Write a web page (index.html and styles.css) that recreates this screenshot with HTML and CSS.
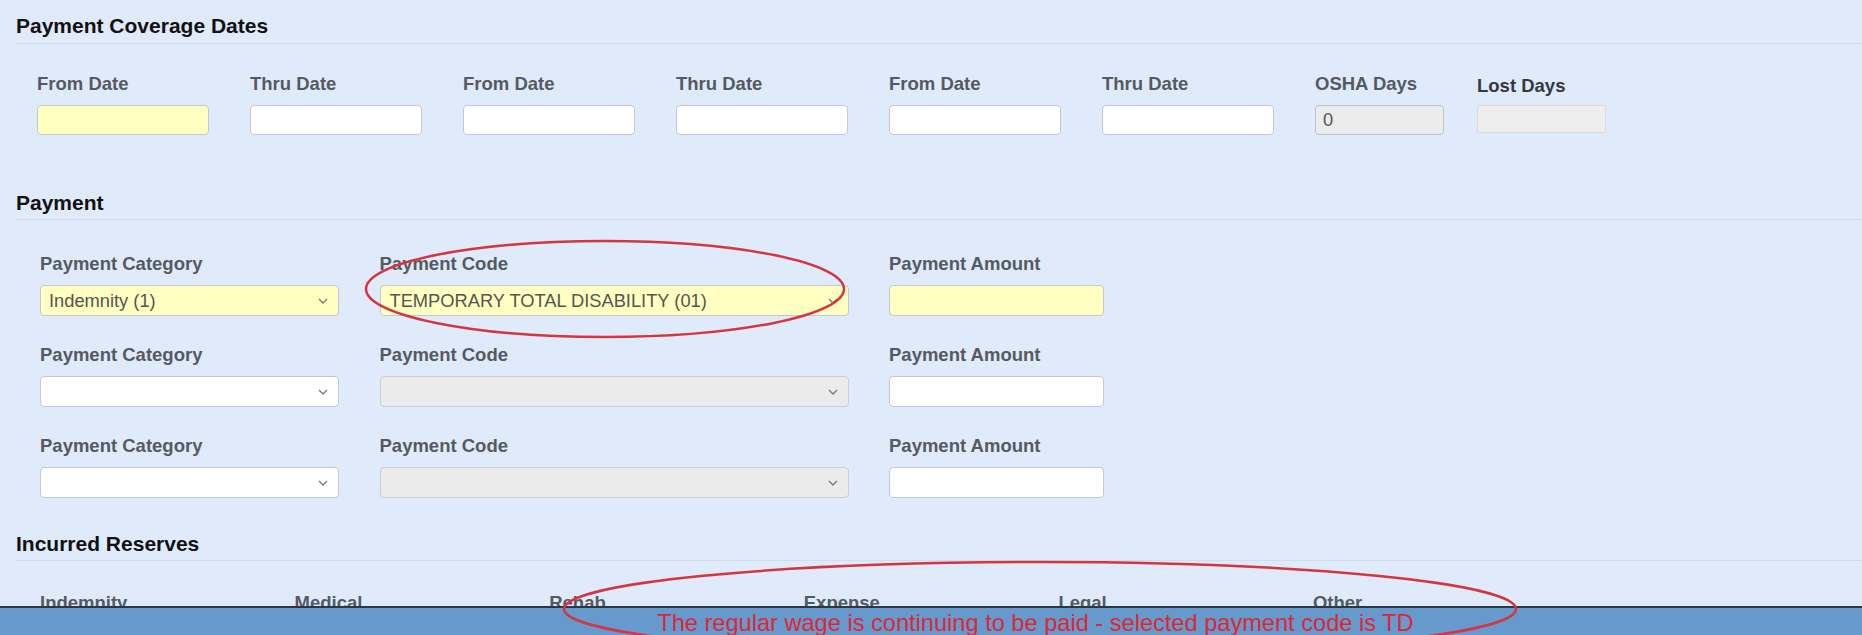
FILE: index.html
```html
<!DOCTYPE html>
<html lang="en">
<head>
<meta charset="utf-8">
<title>Payment</title>
<link rel="stylesheet" href="styles.css">
</head>
<body>
<div class="page">
  <section class="sec">
    <h2 class="sec-title">Payment Coverage Dates</h2>
    <div class="date-row">
      <div class="field date"><div class="lbl">From Date</div><div class="inp yellow"></div></div>
      <div class="field date"><div class="lbl">Thru Date</div><div class="inp"></div></div>
      <div class="field date"><div class="lbl">From Date</div><div class="inp"></div></div>
      <div class="field date"><div class="lbl">Thru Date</div><div class="inp"></div></div>
      <div class="field date"><div class="lbl">From Date</div><div class="inp"></div></div>
      <div class="field date"><div class="lbl">Thru Date</div><div class="inp"></div></div>
      <div class="field days"><div class="lbl">OSHA Days</div><div class="inp readonly"><span class="val">0</span></div></div>
      <div class="field days lost"><div class="lbl lbl-lost">Lost Days</div><div class="inp flat"></div></div>
    </div>
  </section>

  <section class="sec sec-pay">
    <h2 class="sec-title">Payment</h2>
    <div class="pay-grid">
      <div class="field"><div class="lbl">Payment Category</div><div class="sel yellow"><span class="val">Indemnity (1)</span><svg class="chev" width="10" height="6" viewBox="0 0 10 6"><polyline points="1,1 5,5 9,1" fill="none" stroke="#777" stroke-width="1.3"/></svg></div></div>
      <div class="field"><div class="lbl">Payment Code</div><div class="sel yellow"><span class="val">TEMPORARY TOTAL DISABILITY (01)</span><svg class="chev" width="10" height="6" viewBox="0 0 10 6"><polyline points="1,1 5,5 9,1" fill="none" stroke="#777" stroke-width="1.3"/></svg></div></div>
      <div class="field"><div class="lbl">Payment Amount</div><div class="inp amt yellow"></div></div>

      <div class="field"><div class="lbl">Payment Category</div><div class="sel"><span class="val"></span><svg class="chev" width="10" height="6" viewBox="0 0 10 6"><polyline points="1,1 5,5 9,1" fill="none" stroke="#777" stroke-width="1.3"/></svg></div></div>
      <div class="field"><div class="lbl">Payment Code</div><div class="sel disabled"><span class="val"></span><svg class="chev" width="10" height="6" viewBox="0 0 10 6"><polyline points="1,1 5,5 9,1" fill="none" stroke="#777" stroke-width="1.3"/></svg></div></div>
      <div class="field"><div class="lbl">Payment Amount</div><div class="inp amt"></div></div>

      <div class="field"><div class="lbl">Payment Category</div><div class="sel"><span class="val"></span><svg class="chev" width="10" height="6" viewBox="0 0 10 6"><polyline points="1,1 5,5 9,1" fill="none" stroke="#777" stroke-width="1.3"/></svg></div></div>
      <div class="field"><div class="lbl">Payment Code</div><div class="sel disabled"><span class="val"></span><svg class="chev" width="10" height="6" viewBox="0 0 10 6"><polyline points="1,1 5,5 9,1" fill="none" stroke="#777" stroke-width="1.3"/></svg></div></div>
      <div class="field"><div class="lbl">Payment Amount</div><div class="inp amt"></div></div>
    </div>
  </section>

  <section class="sec sec-res">
    <h2 class="sec-title">Incurred Reserves</h2>
    <div class="res-row">
      <div class="lbl">Indemnity</div>
      <div class="lbl">Medical</div>
      <div class="lbl">Rehab</div>
      <div class="lbl">Expense</div>
      <div class="lbl">Legal</div>
      <div class="lbl">Other</div>
    </div>
  </section>
</div>

<div class="footer-bar"><span class="msg">The regular wage is continuing to be paid - selected payment code is TD</span></div>

<svg class="annot" width="1862" height="635" viewBox="0 0 1862 635">
  <ellipse cx="605" cy="289" rx="239" ry="48" fill="none" stroke="#d6343f" stroke-width="2.5"/>
  <ellipse cx="1040" cy="609" rx="476" ry="47" fill="none" stroke="#d6343f" stroke-width="2.5"/>
</svg>
</body>
</html>
```

FILE: styles.css
```css
html, body {
  margin: 0;
  padding: 0;
}
body {
  background: #dfeafb;
  font-family: "Liberation Sans", Arial, sans-serif;
  width: 1862px;
  height: 635px;
  overflow: hidden;
  position: relative;
}
.page {
  padding-top: 14px;
}
.sec-title {
  margin: 0 0 0 16px;
  font-size: 21px;
  line-height: 24px;
  font-weight: bold;
  color: #111;
  padding-bottom: 5px;
  border-bottom: 1px solid #d2deee;
}
.lbl {
  font-size: 18.5px;
  line-height: 20px;
  font-weight: bold;
  color: #555a61;
  white-space: nowrap;
}
.field .lbl {
  margin-bottom: 11px;
}
.date-row {
  display: flex;
  gap: 41px;
  padding: 30px 0 0 37px;
}
.field.date { width: 172px; }
.field.days { width: 129px; }
.field.lost { margin-left: -8px; }
.lbl-lost {
  color: #35383d;
  position: relative;
  top: 2px;
}
.inp {
  height: 30px;
  box-sizing: border-box;
  background: #fff;
  border: 1px solid #c3c9d1;
  border-radius: 4px;
  display: flex;
  align-items: center;
  padding-left: 7px;
}
.inp.readonly {
  background: #ececec;
  border-color: #bfc4cb;
}
.inp.flat {
  background: #eeeeee;
  border: 1px solid #dadada;
  border-radius: 1px;
  height: 28px;
}
.yellow { background: #ffffc2 !important; }
.val {
  font-size: 18.3px;
  color: #555;
  white-space: nowrap;
}
.sec-pay .sec-title { margin-top: 56px; padding-bottom: 4px; }
.pay-grid {
  display: grid;
  grid-template-columns: 299px 469px 215px;
  column-gap: 40.5px;
  row-gap: 29px;
  padding: 34px 0 0 40px;
}
.sel {
  height: 31px;
  box-sizing: border-box;
  background: #fff;
  border: 1px solid #c3c9d1;
  border-radius: 4px;
  display: flex;
  align-items: center;
  justify-content: space-between;
  padding: 0 10px 0 8px;
}
.sel.disabled {
  background: #ebebeb;
  border-color: #cacdd2;
}
.pay-grid .field:nth-child(3n+2) .sel { padding-left: 9px; }
.chev { flex: none; }
.inp.amt { height: 31px; }
.sec-res .sec-title { margin-top: 34px; padding-bottom: 4px; }
.res-row {
  display: grid;
  grid-template-columns: repeat(6, 254.6px);
  padding: 32px 0 0 40px;
}
.footer-bar {
  position: fixed;
  left: 0;
  right: 0;
  bottom: 0;
  height: 27px;
  background: #6699cc;
  border-top: 2px solid #2d3644;
  padding-left: 657px;
  z-index: 5;
}
.msg {
  display: block;
  font-size: 23.6px;
  line-height: 29px;
  color: #e8202c;
  white-space: nowrap;
  padding-top: 1px;
}
.annot {
  position: absolute;
  left: 0;
  top: 0;
  z-index: 10;
  pointer-events: none;
}
```
